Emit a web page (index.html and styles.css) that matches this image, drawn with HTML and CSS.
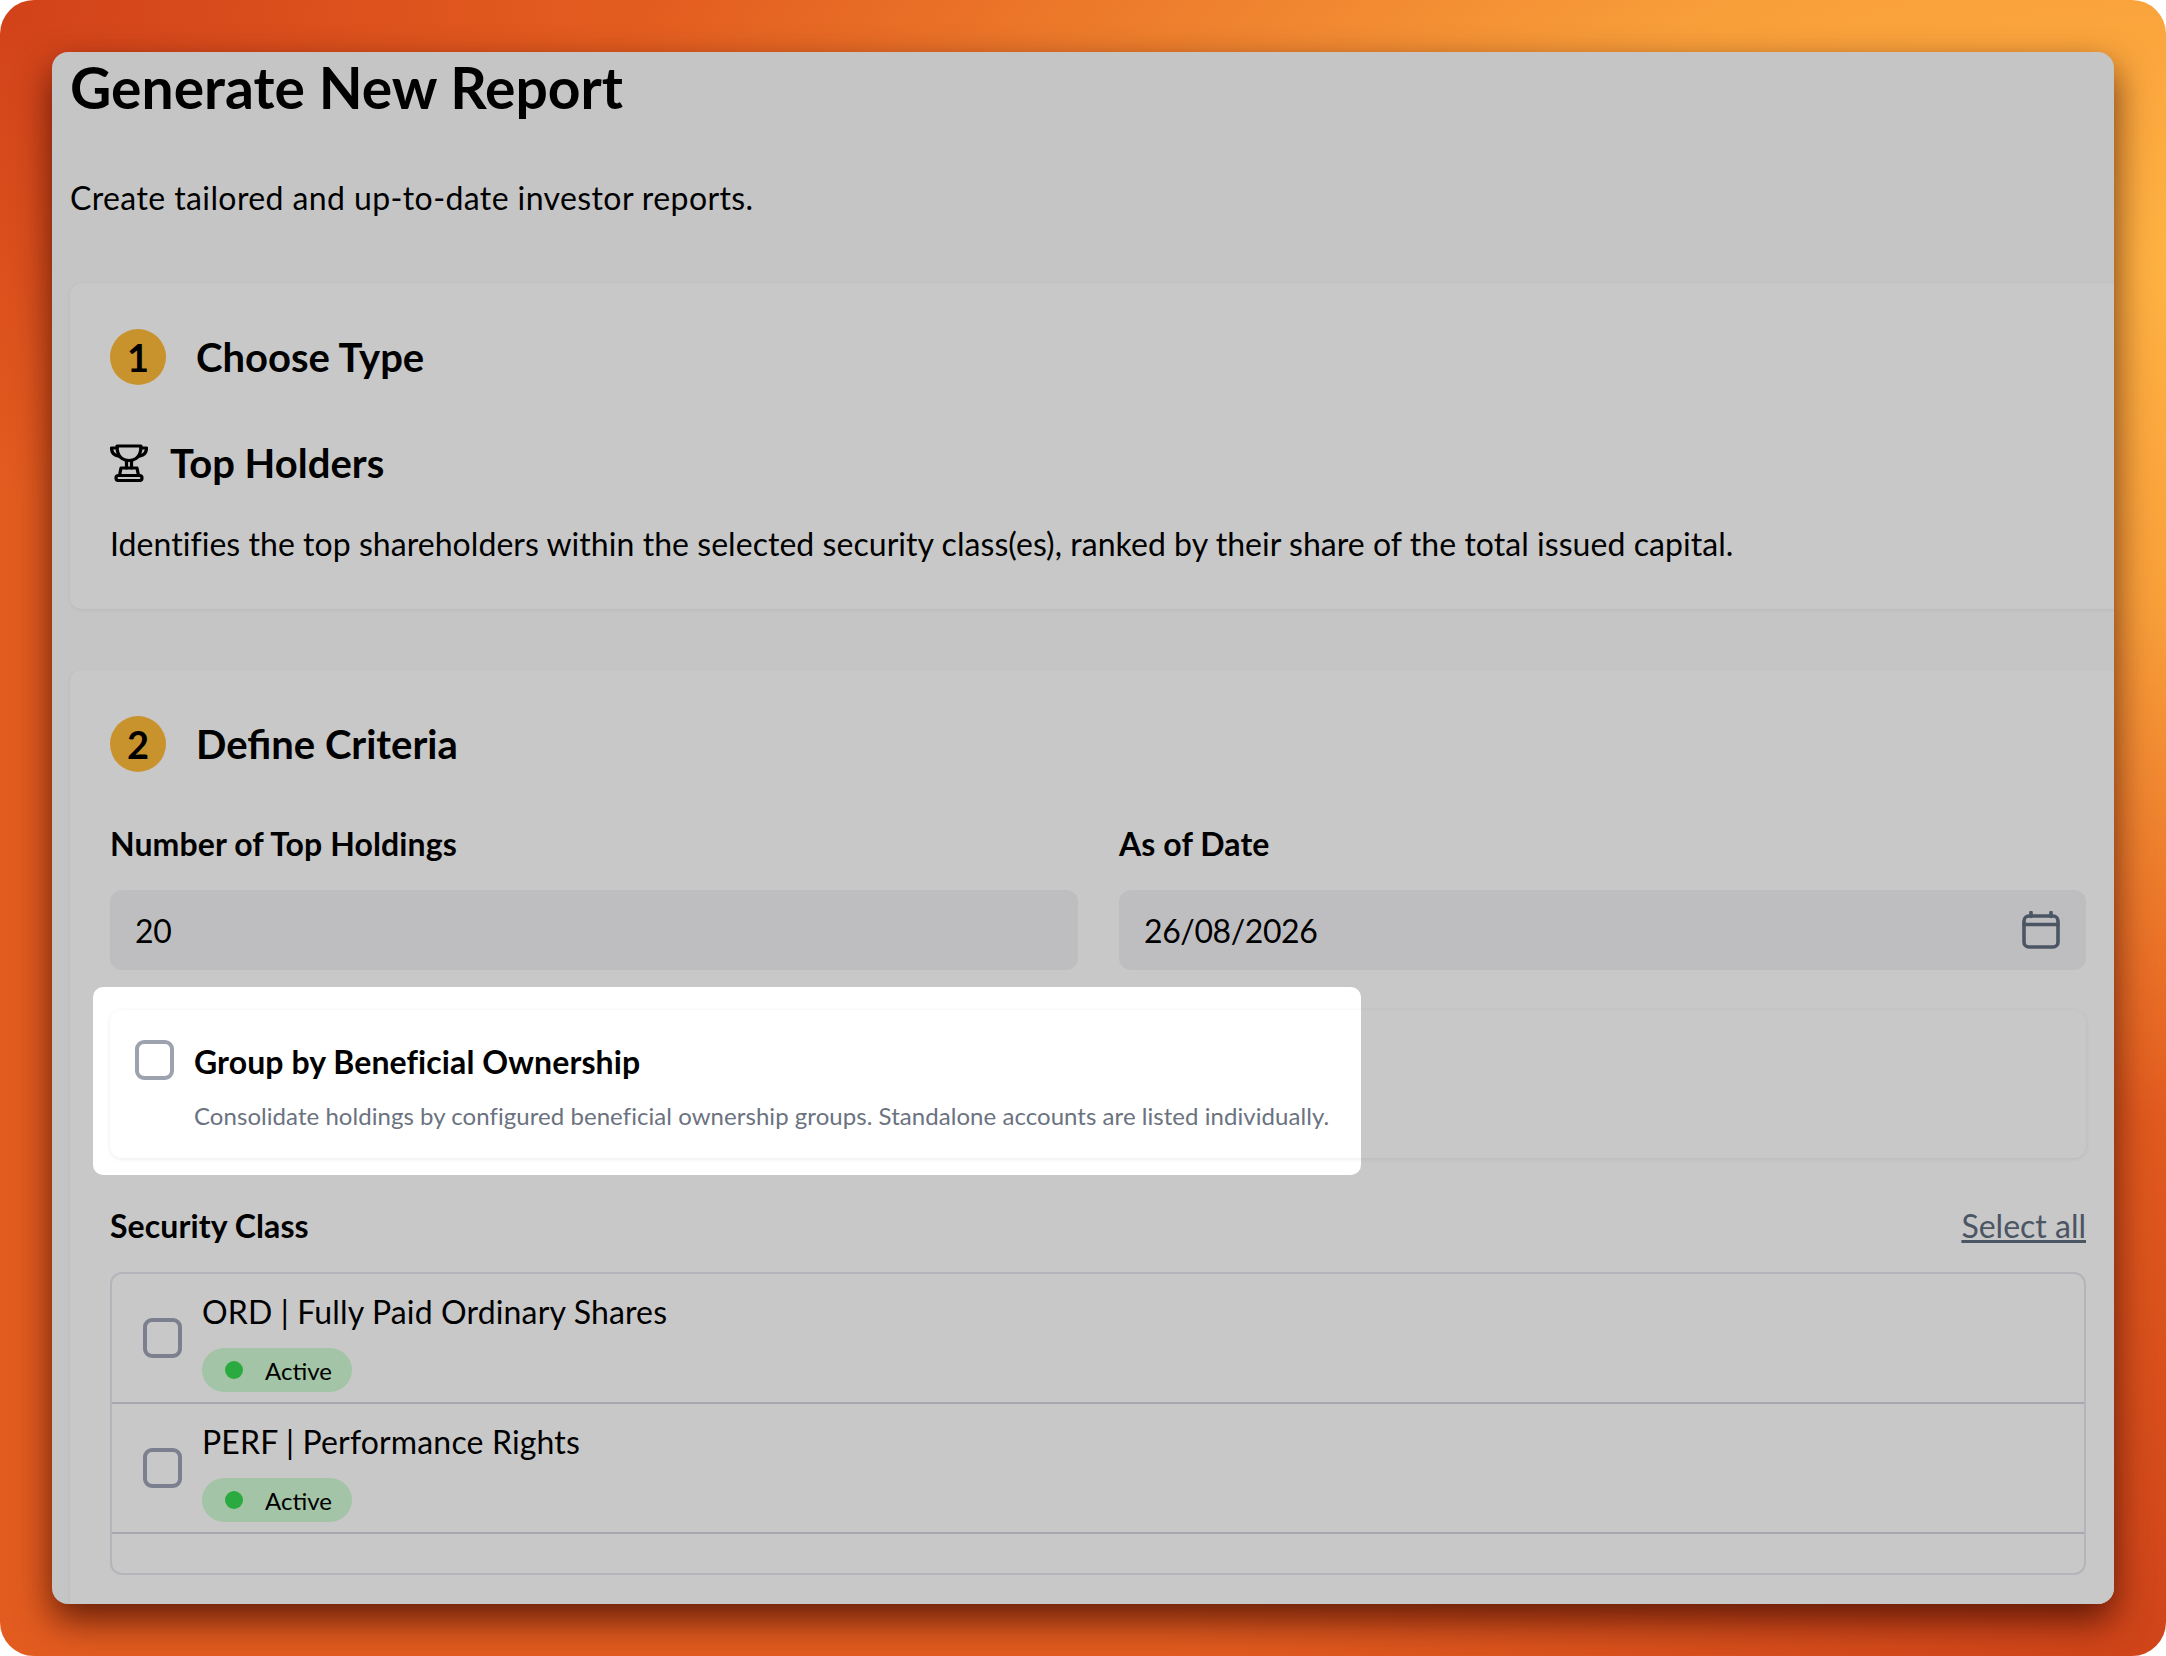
FILE: index.html
```html
<!DOCTYPE html>
<html lang="en">

<head>
    <meta charset="UTF-8">
    <meta name="viewport" content="width=device-width, initial-scale=1.0">
    <title>Generate New Report</title>
    <link rel="stylesheet" href="styles.css">
</head>

<body>
    <div class="backdrop">
        <main class="window">
            <h1 class="page-title">Generate New Report</h1>
            <p class="page-sub">Create tailored and up-to-date investor reports.</p>

            <section class="card card-type">
                <div class="step">
                    <span class="step-num">1</span>
                    <h2 class="step-title">Choose Type</h2>
                </div>
                <div class="type-name">
                    <svg class="trophy" viewBox="0 0 38 38" fill="none" stroke="#000" stroke-width="3.200" stroke-linejoin="round" stroke-linecap="round">
                        <path d="M7 2h24c0 7-2 10.500-5 12.500c-2 1.300-4 2-7 2s-5-.7-7-2c-3-2-5-5.500-5-12.500z" />
                        <path d="M7 4H1.500c0 4 2.500 7 6.500 8" />
                        <path d="M31 4h5.500c0 4-2.500 7-6.500 8" />
                        <path d="M16.500 17v7" />
                        <path d="M21.500 17v7" />
                        <path d="M11 24h16l1.500 7.500h-19z" />
                        <rect x="6" y="31.500" width="26" height="5" rx="2.500" />
                    </svg>
                    <h3 class="type-title">Top Holders</h3>
                </div>
                <p class="type-desc">Identifies the top shareholders within the selected security class(es), ranked by their share of the total issued capital.</p>
            </section>

            <section class="card card-criteria">
                <div class="step">
                    <span class="step-num">2</span>
                    <h2 class="step-title">Define Criteria</h2>
                </div>

                <div class="fields">
                    <div class="field">
                        <label class="field-label">Number of Top Holdings</label>
                        <div class="input">20</div>
                    </div>
                    <div class="field">
                        <label class="field-label">As of Date</label>
                        <div class="input">
                            26/08/2026
                            <svg class="calendar" viewBox="0 0 38 38" fill="none" stroke="#4b5563" stroke-width="3.600" stroke-linecap="round" stroke-linejoin="round">
                                <rect x="2" y="5" width="34" height="31" rx="5" />
                                <path d="M2 13.500h34" />
                                <path d="M9 1.500v4" />
                                <path d="M29 1.500v4" />
                            </svg>
                        </div>
                    </div>
                </div>

                <div class="option">
                    <div class="spotlight">
                        <div class="spotlight-inner"></div>
                    </div>
                    <div class="option-body">
                        <span class="checkbox checkbox-light"></span>
                        <div>
                            <div class="option-title">Group by Beneficial Ownership</div>
                            <div class="option-desc">Consolidate holdings by configured beneficial ownership groups. Standalone accounts are listed individually.</div>
                        </div>
                    </div>
                </div>

                <div class="class-head">
                    <label class="field-label">Security Class</label>
                    <a class="select-all" href="#">Select all</a>
                </div>

                <ul class="class-list">
                    <li class="class-row">
                        <span class="checkbox"></span>
                        <div class="class-info">
                            <div class="class-name">ORD | Fully Paid Ordinary Shares</div>
                            <span class="pill"><span class="dot"></span>Active</span>
                        </div>
                    </li>
                    <li class="class-row">
                        <span class="checkbox"></span>
                        <div class="class-info">
                            <div class="class-name">PERF | Performance Rights</div>
                            <span class="pill"><span class="dot"></span>Active</span>
                        </div>
                    </li>
                </ul>
            </section>
        </main>
    </div>
</body>

</html>
```
FILE: styles.css
```css
* {
    margin: 0;
    padding: 0;
    box-sizing: border-box;
    list-style: none;
}

body {
    background-color: #fff;
    font-family: "Lato", "Liberation Sans", sans-serif;
    color: #000;
}

.backdrop {
    width: 2166px;
    height: 1656px;
    padding: 52px;
    border-radius: 34px;
    overflow: hidden;
    background-color: #e35c1f;
    background-image:
        radial-gradient(ellipse 1600px 850px at 100% 16%, #ffb242 0%, rgba(255, 178, 66, 0.78) 40%, rgba(255, 178, 66, 0) 100%),
        radial-gradient(ellipse 600px 500px at 0% 0%, #d2421a 0%, rgba(208, 64, 26, 0) 100%),
        radial-gradient(ellipse 1000px 600px at 100% 100%, #cf4419 0%, rgba(207, 68, 25, 0) 100%);
}

.window {
    height: 1552px;
    padding-left: 18px;
    background-color: #c5c5c5;
    border-radius: 16px;
    overflow: hidden;
    box-shadow: 0 16px 36px rgba(50, 5, 0, 0.72);
}

.page-title {
    font-size: 57px;
    font-weight: 700;
    line-height: 70px;
}

.page-sub {
    margin-top: 56px;
    font-size: 32px;
    line-height: 40px;
    letter-spacing: 0.4px;
}

.card {
    width: 2056px;
    margin-top: 65px;
    padding: 0 40px;
    background-color: #c8c8c8;
    border-radius: 12px;
    box-shadow: 0 1px 4px rgba(0, 0, 0, 0.06);
}

.card-type {
    height: 326px;
    padding-top: 46px;
}

.card-criteria {
    margin-top: 61px;
    height: 1000px;
    padding-top: 46px;
}

.step {
    display: flex;
    align-items: center;
    gap: 30px;
}

.step-num {
    width: 56px;
    height: 56px;
    display: flex;
    justify-content: center;
    align-items: center;
    border-radius: 50%;
    background-color: #c8922d;
    font-size: 38px;
    font-weight: 700;
}

.step-title {
    font-size: 40px;
    font-weight: 700;
}

.type-name {
    display: flex;
    align-items: center;
    gap: 22px;
    margin-top: 54px;
}

.trophy {
    width: 38px;
    height: 38px;
}

.type-title {
    font-size: 40px;
    font-weight: 700;
}

.type-desc {
    margin-top: 37px;
    font-size: 32px;
    line-height: 40px;
    letter-spacing: 0.05px;
}

.fields {
    display: grid;
    grid-template-columns: 968px 967px;
    gap: 41px;
    margin-top: 52px;
}

.field-label {
    display: block;
    font-size: 32px;
    font-weight: 700;
    line-height: 40px;
    letter-spacing: 0.1px;
}

.input {
    display: flex;
    justify-content: space-between;
    align-items: center;
    height: 80px;
    margin-top: 26px;
    padding: 0 26px 0 25px;
    background-color: #bebec0;
    border-radius: 12px;
    font-size: 32px;
    letter-spacing: -0.4px;
}

.calendar {
    width: 38px;
    height: 38px;
}

.option {
    position: relative;
    width: 1976px;
    height: 148px;
    margin-top: 40px;
    border-radius: 12px;
    box-shadow: 0 1px 4px rgba(0, 0, 0, 0.08);
}

.spotlight {
    position: absolute;
    top: -23px;
    left: -17px;
    width: 1268px;
    height: 188px;
    padding: 23px 0 0 17px;
    background-color: #fff;
    border-radius: 10px;
    overflow: hidden;
}

.spotlight-inner {
    width: 1976px;
    height: 148px;
    border-radius: 12px;
    box-shadow: 0 1px 4px rgba(0, 0, 0, 0.08);
}

.option-body {
    position: relative;
    display: flex;
    gap: 20px;
    padding: 30px 0 0 25px;
}

.checkbox {
    flex-shrink: 0;
    width: 39px;
    height: 40px;
    border: 4px solid #7b7f8e;
    border-radius: 9px;
}

.checkbox-light {
    border-color: #9ca3af;
}

.option-title {
    font-size: 32px;
    font-weight: 700;
    line-height: 44px;
    letter-spacing: 0.1px;
}

.option-desc {
    margin-top: 16px;
    font-size: 24px;
    line-height: 32px;
    letter-spacing: 0.05px;
    color: #6b7280;
}

.class-head {
    display: flex;
    justify-content: space-between;
    align-items: center;
    width: 1976px;
    margin-top: 48px;
}

.select-all {
    font-size: 32px;
    line-height: 40px;
    color: #4b5563;
}

.class-list {
    width: 1976px;
    height: 303px;
    margin-top: 26px;
    border: 2px solid #b4b4ba;
    border-radius: 12px;
}

.class-row {
    display: flex;
    align-items: center;
    gap: 20px;
    height: 130px;
    padding-left: 31px;
    border-bottom: 2px solid #a8a8b0;
}

.class-info {
    display: flex;
    flex-direction: column;
    align-items: flex-start;
    padding-top: 6px;
}

.class-name {
    font-size: 32px;
    line-height: 44px;
    letter-spacing: 0.15px;
}

.pill {
    display: flex;
    align-items: center;
    height: 44px;
    margin-top: 14px;
    padding: 0 20px 0 23px;
    background-color: #a3c4a6;
    border-radius: 22px;
    font-size: 24px;
}

.dot {
    width: 18px;
    height: 18px;
    margin-right: 22px;
    background-color: #2aaa3f;
    border-radius: 50%;
}
```
